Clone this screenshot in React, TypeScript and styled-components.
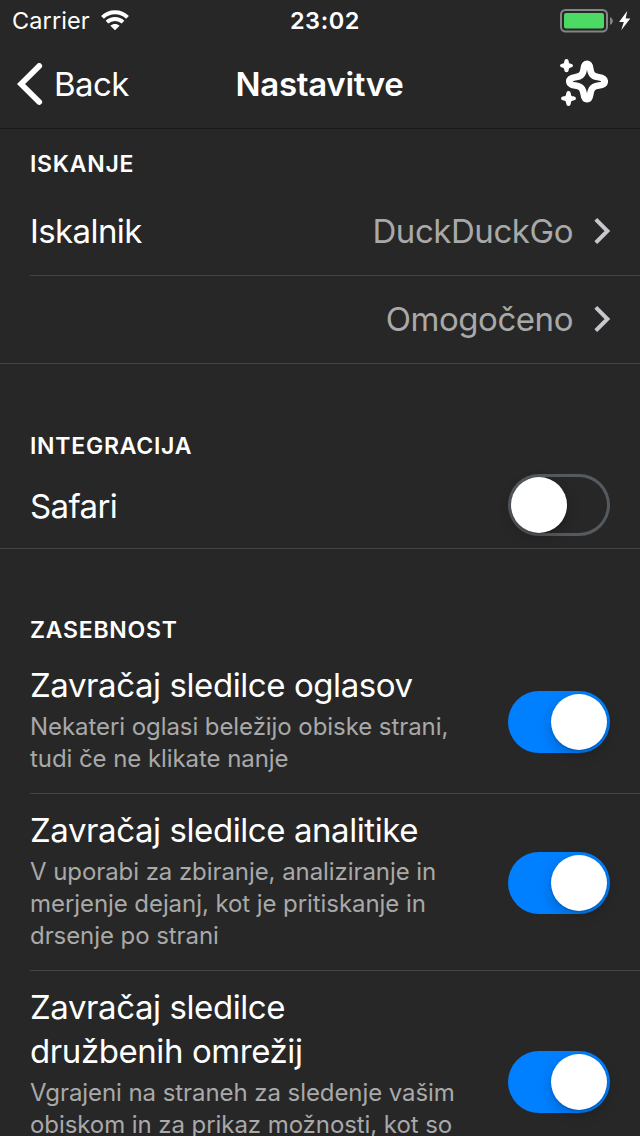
import React from "react";
import styled, { createGlobalStyle } from "styled-components";

const Global = createGlobalStyle`
  * { box-sizing: border-box; }
  body { margin: 0; background: #272727; color: #fff; font-family: Inter, sans-serif; overflow: hidden; }
  svg { display: block; flex: none; }
`;
const Screen = styled.main`width: 640px; height: 1136px; overflow: hidden; background: #272727;`;
const StatusBar = styled.header`
  height: 41px; display: grid; grid-template-columns: 1fr auto 1fr; align-items: center; padding: 0 9px 0 12px;
`;
const StatusGroup = styled.div<{ $end?: boolean }>`
  display: flex; align-items: center; gap: ${p => (p.$end ? 5 : 11)}px; justify-content: ${p => (p.$end ? "flex-end" : "flex-start")};
`;
const StatusText = styled.span<{ $clock?: boolean }>`
  font-size: 23.5px; line-height: 28px; white-space: nowrap;
  font-weight: ${p => (p.$clock ? 600 : 400)}; letter-spacing: ${p => (p.$clock ? 0.6 : 0.1)}px;
  padding-left: ${p => (p.$clock ? 7 : 0)}px;
`;
const NavBar = styled.nav`
  height: 88px; display: grid; grid-template-columns: 1fr auto 1fr; align-items: center; padding: 0 32px 0 17px;
  border-bottom: 1px solid #1a1a1a;
`;
const Back = styled.div`display: flex; align-items: center; gap: 11px;`;
const BackLabel = styled.span`
  padding-bottom: 2px; font-size: 33px; line-height: 40px; letter-spacing: -0.6px; white-space: nowrap;
`;
const Action = styled.div`display: flex; justify-content: flex-end; padding-bottom: 4px;`;
const PageTitle = styled.h1`
  margin: 0; padding: 0 0 2px 14px; font-size: 33px; line-height: 40px; font-weight: 600; letter-spacing: -0.3px;
`;
const Label = styled.span`
  font-size: 33px; line-height: 40px; letter-spacing: -0.6px; white-space: nowrap;
`;
const ValueLabel = styled(Label)`letter-spacing: -0.45px;`;
const Section = styled.section<{ $top: number }>`padding-top: ${p => p.$top}px;`;
const Heading = styled.h2`
  margin: 0; padding-left: 30px; height: 28px; line-height: 28px; font-size: 23px; font-weight: 600; letter-spacing: 0.75px;
`;
const Row = styled.div<{ $height: number; $full?: boolean; $top?: number; $bottom?: number }>`
  height: ${p => p.$height}px; margin-left: ${p => (p.$full ? 0 : 30)}px;
  padding: ${p => p.$top ?? 0}px 29px ${p => p.$bottom ?? 0}px ${p => (p.$full ? 30 : 0)}px;
  display: flex; align-items: center; justify-content: space-between; border-bottom: 1px solid #444;
`;
const Value = styled.div`display: flex; align-items: center; gap: 21px; margin-left: auto; color: #a9a9a9;`;
const SwitchRow = styled(Row)`padding-right: 30px; ${Label} { padding-top: 2px; }`;
const SettingRow = styled(Row)`align-items: flex-start; padding: 0 30px 0 0;`;
const Copy = styled.div<{ $top: number }>`padding-top: ${p => p.$top}px;`;
const Title = styled.div`font-size: 33px; line-height: 44px; letter-spacing: -0.42px; white-space: nowrap;`;
const Detail = styled.div`
  margin-top: 4px; font-size: 24px; line-height: 32px; letter-spacing: -0.07px; color: #a9a9a9; white-space: nowrap;
`;
const Toggle = styled.div<{ $on?: boolean; $top?: number }>`
  width: 102px; height: 62px; border-radius: 31px; padding: 3px; display: flex; flex: none; margin-top: ${p => p.$top ?? 0}px;
  justify-content: ${p => (p.$on ? "flex-end" : "flex-start")};
  background: ${p => (p.$on ? "#007fff" : "transparent")}; box-shadow: ${p => (p.$on ? "none" : "inset 0 0 0 3px #555a60")};
`;
const Knob = styled.i`
  width: 56px; height: 56px; border-radius: 50%; background: #fff; box-shadow: 0 5px 14px rgba(0,0,0,.2), 0 1px 2px rgba(0,0,0,.2);
`;

const Chevron = () => (
  <svg width="17" height="26" viewBox="0 0 17 26" fill="none" stroke="#c7c7cc" strokeWidth="4"><path d="M1.8 1.4 13.4 13 1.8 24.6" /></svg>
);
const Wifi = () => (
  <svg width="28" height="21" viewBox="0 0 28 21" fill="none" stroke="#fff">
    <path d="M1.5 7.4C8.3.6 19.7.6 26.5 7.4" strokeWidth="4" />
    <path d="M6 12.2C10.4 7.9 17.6 7.9 22 12.2" strokeWidth="3.8" />
    <path d="M14 20.3 9.4 15.8C12 13.4 16 13.4 18.6 15.8Z" fill="#fff" stroke="none" />
  </svg>
);
const Battery = () => (
  <svg width="54" height="24" viewBox="0 0 54 24">
    <rect x="1" y="1" width="46" height="21.5" rx="4.5" fill="none" stroke="#858585" strokeWidth="2" />
    <rect x="4" y="4" width="40" height="15.5" rx="2" fill="#4cd964" />
    <path d="M50 8.2C53.8 9.4 53.8 14.6 50 15.8Z" fill="#858585" />
  </svg>
);
const Bolt = () => (
  <svg width="12" height="20" viewBox="0 0 12 20"><path d="M8.2 0 .1 11H4.8L2.2 19.2 11.3 7.5H6.7Z" fill="#fff" /></svg>
);
const BackArrow = () => (
  <svg width="26" height="43" viewBox="0 0 26 43" fill="none" stroke="#fff" strokeWidth="5.8" strokeLinecap="round">
    <path d="M22.2 3 4 21 22.2 39" />
  </svg>
);
const Sparkles = () => (
  <svg width="48" height="48" viewBox="0 0 48 48">
    <path
      d="M27 4.8C29.3 4.8 29.8 6.4 30.2 9.6C31 15.6 33 17.5 38.8 18.3C42.3 18.8 44.7 19.8 44.7 22.5C44.7 25.2 42.3 26 38.8 26.5C33 27.3 31 29.4 30.2 35.4C29.8 38.6 29.3 40.2 27 40.2C24.7 40.2 24.2 38.6 23.8 35.4C23 29.4 21 27.3 15.2 26.5C11.7 26 9.3 25.2 9.3 22.5C9.3 19.8 11.7 18.8 15.2 18.3C21 17.5 23 15.6 23.8 9.6C24.2 6.4 24.7 4.8 27 4.8Z"
      fill="none" stroke="#fff" strokeWidth="6.7" strokeLinejoin="round"
    />
    <path d="M6.5 0Q8.5 0 8.7 2.2C8.9 4.2 9.2 4.4 11 4.7Q13 5 13 6.6Q13 8.2 11 8.4C9.2 8.7 8.9 9.1 8.7 11Q8.5 13.2 6.5 13.2Q4.5 13.2 4.3 11C4.1 9.1 3.8 8.7 2 8.4Q0 8.2 0 6.6Q0 5 2 4.7C3.8 4.4 4.1 4.2 4.3 2.2Q4.5 0 6.5 0Z" fill="#fff" />
    <path d="M8.5 32Q10.5 32 10.8 34.4C11.1 36.7 11.4 37 13.5 37.3Q16 37.7 16 39.5Q16 41.2 13.5 41.6C11.4 41.9 11.1 42.2 10.8 44.5Q10.5 47 8.5 47Q6.5 47 6.2 44.5C5.9 42.2 5.6 41.9 3.5 41.6Q1 41.2 1 39.5Q1 37.7 3.5 37.3C5.6 37 5.9 36.7 6.2 34.4Q6.5 32 8.5 32Z" fill="#fff" />
  </svg>
);

export default function App() {
  return (
    <Screen>
      <Global />
      <StatusBar>
        <StatusGroup><StatusText>Carrier</StatusText><Wifi /></StatusGroup>
        <StatusText $clock>23:02</StatusText>
        <StatusGroup $end><Battery /><Bolt /></StatusGroup>
      </StatusBar>
      <NavBar>
        <Back><BackArrow /><BackLabel>Back</BackLabel></Back>
        <PageTitle>Nastavitve</PageTitle>
        <Action><Sparkles /></Action>
      </NavBar>
      <Section $top={21}>
        <Heading>ISKANJE</Heading>
        <Row $height={98} $top={8}><Label>Iskalnik</Label><Value><ValueLabel>DuckDuckGo</ValueLabel><Chevron /></Value></Row>
        <Row $height={88} $full $bottom={2}><Value><ValueLabel>Omogočeno</ValueLabel><Chevron /></Value></Row>
      </Section>
      <Section $top={68}>
        <Heading>INTEGRACIJA</Heading>
        <SwitchRow $height={89} $full $top={2}><Label>Safari</Label><Toggle><Knob /></Toggle></SwitchRow>
      </Section>
      <Section $top={67}>
        <Heading>ZASEBNOST</Heading>
        <SettingRow $height={150}>
          <Copy $top={19}>
            <Title>Zavračaj sledilce oglasov</Title>
            <Detail>Nekateri oglasi beležijo obiske strani,<br />tudi če ne klikate nanje</Detail>
          </Copy>
          <Toggle $on $top={47}><Knob /></Toggle>
        </SettingRow>
        <SettingRow $height={177}>
          <Copy $top={14}>
            <Title>Zavračaj sledilce analitike</Title>
            <Detail>V uporabi za zbiranje, analiziranje in<br />merjenje dejanj, kot je pritiskanje in<br />drsenje po strani</Detail>
          </Copy>
          <Toggle $on $top={58}><Knob /></Toggle>
        </SettingRow>
        <SettingRow $height={221}>
          <Copy $top={14}>
            <Title>Zavračaj sledilce<br />družbenih omrežij</Title>
            <Detail>Vgrajeni na straneh za sledenje vašim<br />obiskom in za prikaz možnosti, kot so</Detail>
          </Copy>
          <Toggle $on $top={80}><Knob /></Toggle>
        </SettingRow>
      </Section>
    </Screen>
  );
}
